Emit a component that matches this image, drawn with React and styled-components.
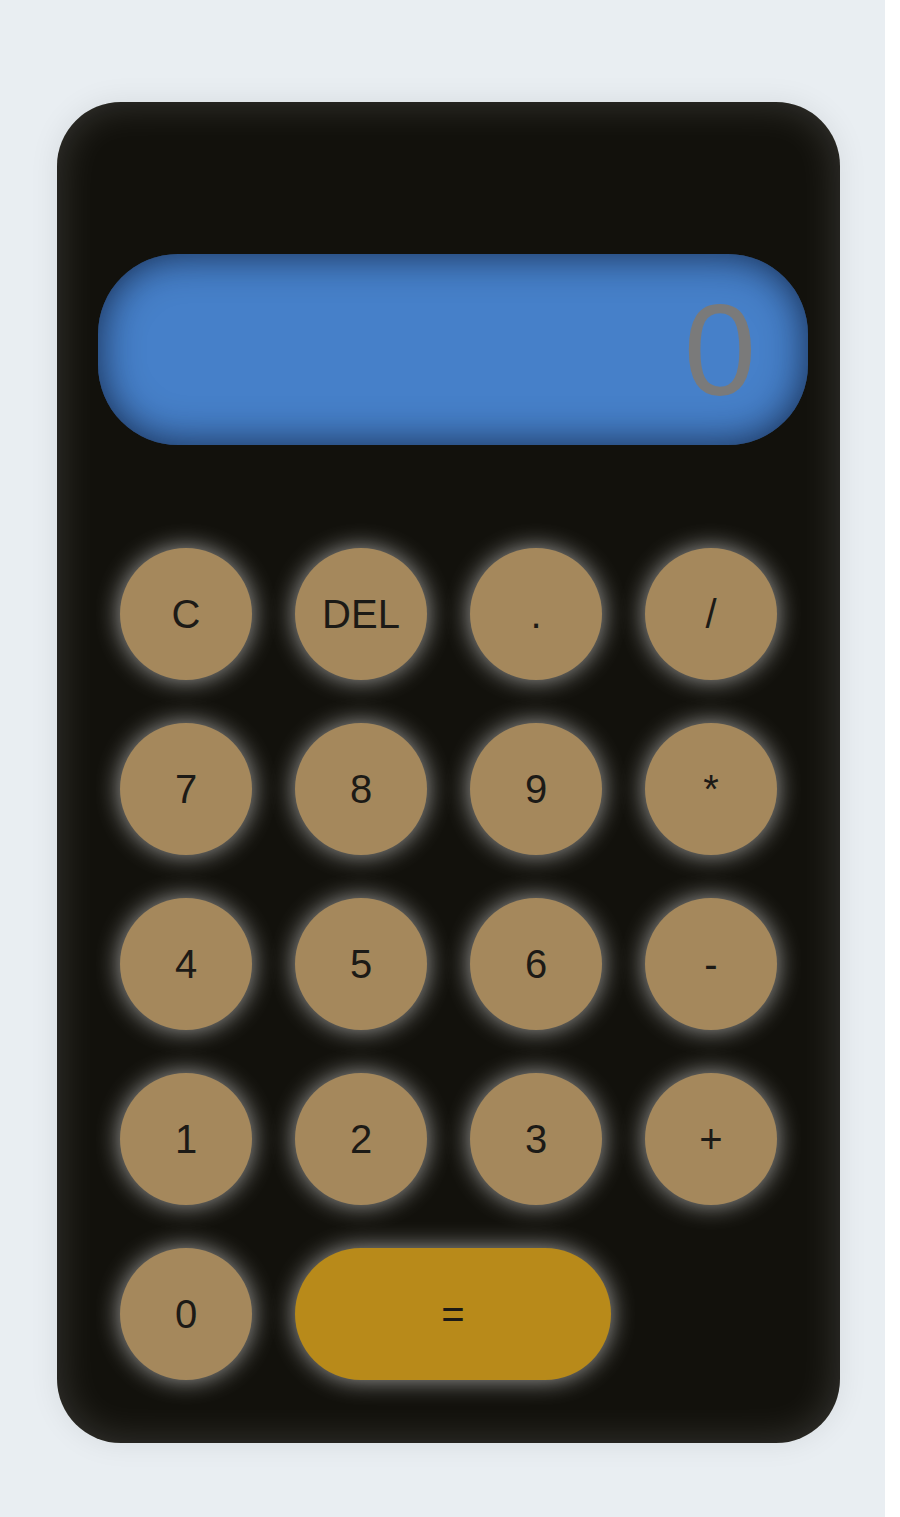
import React, { useState } from "react";
import styled, { createGlobalStyle } from "styled-components";

const GlobalStyle = createGlobalStyle`
    html, body {
        margin: 0;
        padding: 0;
        background: #ffffff;
    }
    #root {
        width: 885px;
        min-height: 1517px;
        background: #e9eef2;
        font-family: "Liberation Sans", Arial, sans-serif;
    }
`;

const Page = styled.div`
    padding: 102px 0 0 57px;
`;

const Body = styled.div`
    width: 783px;
    height: 1341px;
    box-sizing: border-box;
    padding: 152px 32px 0 41px;
    background: #12110c;
    border-radius: 64px;
    box-shadow:
        inset 0 0 40px rgba(255, 255, 255, 0.17),
        0 0 30px rgba(0, 0, 0, 0.08);
    display: flex;
    flex-direction: column;
`;

const Screen = styled.div`
    height: 191px;
    border-radius: 80px;
    background: #4680c9;
    box-shadow: inset 0 0 40px rgba(8, 16, 40, 0.8);
    display: flex;
    align-items: center;
    justify-content: flex-end;
    padding-right: 52px;
    color: #7a7a7a;
    font-size: 130px;
    line-height: 1;
`;

const Keys = styled.div`
    margin: 103px 0 0 22px;
    display: grid;
    grid-template-columns: repeat(4, 132px);
    grid-auto-rows: 132px;
    column-gap: 43px;
    row-gap: 43px;
`;

const Key = styled.button`
    grid-column: span ${p => p.$span || 1};
    border: none;
    border-radius: 66px;
    background: ${p => p.$accent ? "#b88a1a" : "#a5885c"};
    box-shadow: 0 0 24px rgba(255, 255, 255, 0.62);
    color: #1c1a16;
    font-family: "Liberation Sans", Arial, sans-serif;
    font-size: 40px;
    padding: 0;
    cursor: pointer;
    ${p => p.$span ? "width: 316px;" : ""}
`;

const keys = [
    "C", "DEL", ".", "/",
    "7", "8", "9", "*",
    "4", "5", "6", "-",
    "1", "2", "3", "+",
    "0"
];

export default function App() {
    const [value, setValue] = useState("0");

    const press = (k) => {
        if (k === "C") return setValue("0");
        if (k === "DEL") return setValue(v => v.length > 1 ? v.slice(0, -1) : "0");
        setValue(v => v === "0" ? k : v + k);
    };

    const solve = () => {
        try {
            // eslint-disable-next-line no-new-func
            setValue(String(Function(`return (${value})`)()));
        } catch (e) {
            setValue("0");
        }
    };

    return (
        <>
            <GlobalStyle />
            <Page>
                <Body>
                    <Screen>{value}</Screen>
                    <Keys>
                        {keys.map(k => (
                            <Key key={k} onClick={() => press(k)}>{k}</Key>
                        ))}
                        <Key $span={2} $accent onClick={solve}>=</Key>
                    </Keys>
                </Body>
            </Page>
        </>
    );
}
